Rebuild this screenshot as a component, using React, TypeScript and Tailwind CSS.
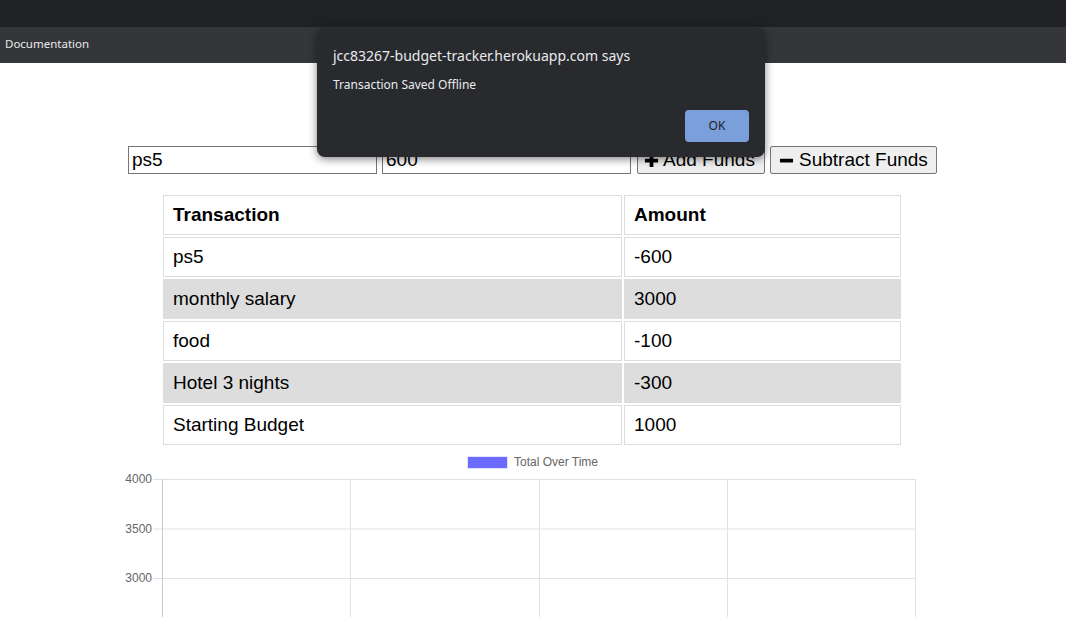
import React from "react";

type Row = { name: string; amount: string };

const rows: Row[] = [
  { name: "ps5", amount: "-600" },
  { name: "monthly salary", amount: "3000" },
  { name: "food", amount: "-100" },
  { name: "Hotel 3 nights", amount: "-300" },
  { name: "Starting Budget", amount: "1000" },
];

function Chart() {
  const xs = [162, 350, 539, 727, 915];
  const ys = [479, 528.5, 578];
  const labels = ["4000", "3500", "3000"];
  // svg origin is page (110, 450)
  return (
    <svg width="820" height="167" viewBox="110 450 820 167" className="block">
      <rect x="467.5" y="456.5" width="40" height="12" fill="#6b6bff" stroke="#e3e3ff" />
      <text x="514" y="466" fontSize="12" fill="#666" fontFamily="Liberation Sans, Arial, sans-serif">
        Total Over Time
      </text>
      {ys.map((y, i) => (
        <g key={y}>
          <line x1="153" x2="915" y1={y + 0.5} y2={y + 0.5} stroke="#e1e1e1" />
          <text
            x="152"
            y={y + 4}
            fontSize="12"
            fill="#666"
            textAnchor="end"
            fontFamily="Liberation Sans, Arial, sans-serif"
          >
            {labels[i]}
          </text>
        </g>
      ))}
      {xs.map((x, i) => (
        <line
          key={x}
          x1={x + 0.5}
          x2={x + 0.5}
          y1="479"
          y2="617"
          stroke={i === 0 ? "#c8c8c8" : "#e1e1e1"}
        />
      ))}
    </svg>
  );
}

function PlusIcon() {
  return (
    <svg width="15" height="15" viewBox="0 0 16 16" className="inline-block shrink-0">
      <path d="M6 1h4v5h5v4h-5v5H6v-5H1V6h5z" fill="#000" />
    </svg>
  );
}

function MinusIcon() {
  return (
    <svg width="15" height="15" viewBox="0 0 16 16" className="inline-block shrink-0">
      <rect x="1" y="6" width="14" height="4" rx="0.5" fill="#000" />
    </svg>
  );
}

const cell = "flex h-[40px] items-center border border-[#dddddd] px-[9px]";

export default function App() {
  return (
    <div className="relative h-[617px] w-[1066px] overflow-hidden bg-white font-['Liberation_Sans',Arial,sans-serif]">
      {/* browser chrome */}
      <div className="h-[27px] bg-[#202124]" />
      <div className="flex h-[36px] items-center bg-[#35363a] px-[5px] pb-[3px] font-['Noto_Sans',sans-serif] text-[11.5px] text-[#e8eaed]">
        Documentation
      </div>

      {/* page */}
      <div className="flex flex-col pt-[83px]">
        <div className="ml-[128px] flex h-[28px] items-stretch gap-[5px]">
          <input
            readOnly
            value="ps5"
            className="w-[249px] border border-[#767676] px-[3px] text-[19px] text-black outline-none"
          />
          <input
            readOnly
            value="600"
            className="w-[249px] border border-[#767676] px-[3px] text-[19px] text-black outline-none"
          />
          <button className="ml-[1px] flex w-[128px] items-center gap-[4px] whitespace-nowrap rounded-[2px] border border-[#767676] bg-[#efefef] px-[6px] text-[19px] text-black">
            <PlusIcon />
            Add Funds
          </button>
          <button className="flex w-[167px] items-center gap-[5px] whitespace-nowrap rounded-[2px] border border-[#767676] bg-[#efefef] px-[8px] text-[19px] text-black">
            <MinusIcon />
            Subtract Funds
          </button>
        </div>

        <div className="ml-[163px] mt-[21px] grid w-[738px] grid-cols-[459px_277px] gap-[2px] text-[19px] text-black">
          <div className={`${cell} font-bold`}>Transaction</div>
          <div className={`${cell} font-bold`}>Amount</div>
          {rows.map((r, i) => (
            <React.Fragment key={r.name}>
              <div className={`${cell} ${i % 2 === 1 ? "bg-[#dddddd]" : "bg-white"}`}>{r.name}</div>
              <div className={`${cell} ${i % 2 === 1 ? "bg-[#dddddd]" : "bg-white"}`}>{r.amount}</div>
            </React.Fragment>
          ))}
        </div>

        <div className="ml-[110px] mt-[5px] w-[820px]">
          <Chart />
        </div>
      </div>

      {/* alert dialog */}
      <div className="absolute left-[317px] top-[28px] h-[129px] w-[448px] rounded-[8px] bg-[#292a2d] font-['Noto_Sans',sans-serif] shadow-[0_2px_8px_rgba(0,0,0,0.5)]">
        <div className="px-[16px] pt-[18px] text-[14px] leading-[20px] text-[#e8eaed]">
          jcc83267-budget-tracker.herokuapp.com says
        </div>
        <div className="px-[16px] pt-[11px] text-[12px] leading-[16px] text-[#e8eaed]">Transaction Saved Offline</div>
        <div className="flex justify-end px-[16px] pt-[17px]">
          <button className="h-[32px] w-[64px] rounded-[4px] bg-[#7a9fda] text-[12px] text-[#202124]">OK</button>
        </div>
      </div>
    </div>
  );
}
